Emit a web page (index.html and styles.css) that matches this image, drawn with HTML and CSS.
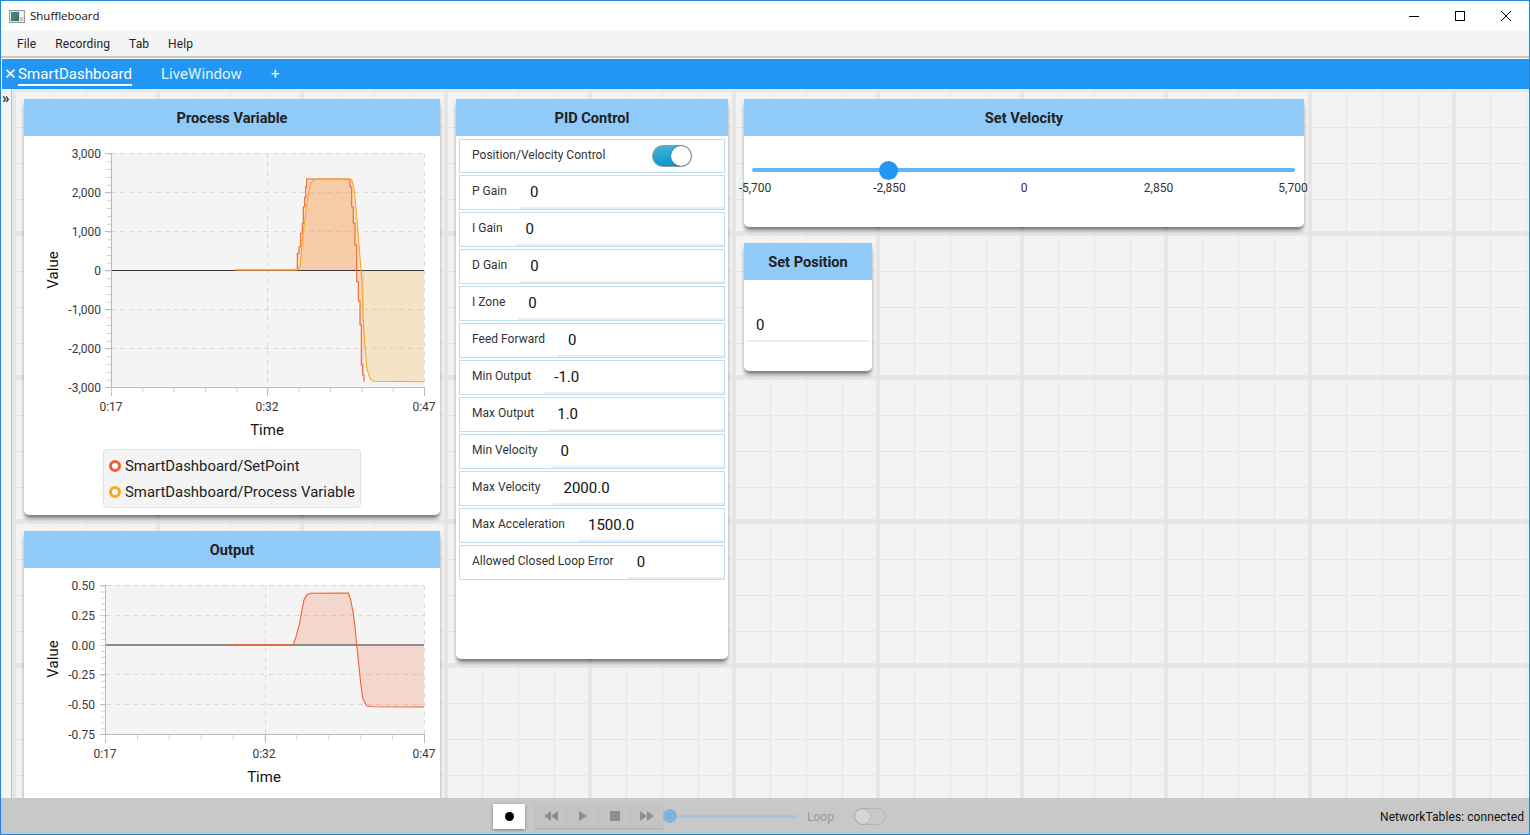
FILE: index.html
```html
<!DOCTYPE html>
<html lang="en">
<head>
  <meta charset="UTF-8" />
  <title>Shuffleboard</title>
  <link rel="stylesheet" href="styles.css">
</head>
<body>
  <div class="window">
    <div class="titlebar">
      <svg class="app-icon" width="16" height="13" viewBox="0 0 16 13">
        <defs>
          <linearGradient id="iconGrad" x1="0" y1="0" x2="1" y2="1">
            <stop offset="0" stop-color="#4f8f8f"/>
            <stop offset="1" stop-color="#2f6f6f"/>
          </linearGradient>
        </defs>
        <rect x=".5" y=".5" width="15" height="12" fill="#e4e8e6" stroke="#9a9a9a"/>
        <rect x="2" y="2" width="8" height="9" fill="url(#iconGrad)"/>
        <rect x="11" y="2" width="3" height="5" fill="#ffffff"/>
        <rect x="11" y="7" width="3" height="4" fill="#bcd0c4"/>
      </svg>
      <span class="app-name">Shuffleboard</span>
      <div class="win-controls">
        <svg width="46" height="30" viewBox="0 0 46 30"><path d="M18 15.5H28" stroke="#000" fill="none"/></svg>
        <svg width="46" height="30" viewBox="0 0 46 30"><rect x="18.5" y="10.5" width="9" height="9" stroke="#000" fill="none"/></svg>
        <svg width="46" height="30" viewBox="0 0 46 30"><path d="M18 10L28 20M28 10L18 20" stroke="#000" fill="none"/></svg>
      </div>
    </div>

    <div class="menubar">
      <span>File</span>
      <span>Recording</span>
      <span>Tab</span>
      <span>Help</span>
    </div>

    <div class="tabbar">
      <span class="tab-close">✕</span>
      <span class="tab active">SmartDashboard</span>
      <span class="tab">LiveWindow</span>
      <span class="tab-add">+</span>
    </div>

    <div class="main">
      <div class="sidebar">»</div>
      <div class="canvas">

        <div class="tile process">
          <div class="tile-title">Process Variable</div>
          <div class="chart-body">
            <svg class="chart" width="416" height="313" viewBox="24 136 416 313">
              <rect class="plot-bg" x="111" y="153" width="313" height="234"/>
              <path class="grid" d="M111 153.5H424M111 192.5H424M111 231.5H424M111 309.5H424M111 348.5H424M267.5 153V387M424.5 153V387"/>
              <polygon class="fill-red" points="235,270 296.5,270 297.3,253.3 299,253.3 299,246.7 300.7,246.7 300.7,233.3 302.3,233.3 302.3,223.3 303.3,223.3 303.3,206.7 304.7,206.7 304.7,197.3 305.7,197.3 305.7,186.7 306.7,186.7 306.7,179 350,179 350,186.7 351.7,186.7 351.7,206.7 353.3,206.7 353.3,223.3 355,223.3 355,245 356.7,245 356.7,281.7 358.3,281.7 358.3,301 360,301 360,325 361.3,325 361.3,365 362.7,365 362.7,375 364,375 364,270"/>
              <polygon class="fill-yellow" points="235,270 296.7,270 300,266.7 301,256.7 303.3,231.7 306,211.7 308.3,193.3 310.7,183.3 313.3,180 316.7,179 348.3,179 351.7,180 354,188.3 356,208.3 358.3,235 360,258.3 361.7,278.3 363.3,321.7 365.3,351.7 367.3,370 370,378.3 373.3,381.3 424,381.7 424,270"/>
              <path class="zero-line" d="M111 270.5H424"/>
              <polyline class="line-red" points="235,270 296.5,270 297.3,270 297.3,253.3 299,253.3 299,246.7 300.7,246.7 300.7,233.3 302.3,233.3 302.3,223.3 303.3,223.3 303.3,206.7 304.7,206.7 304.7,197.3 305.7,197.3 305.7,186.7 306.7,186.7 306.7,179 350,179 350,186.7 351.7,186.7 351.7,206.7 353.3,206.7 353.3,223.3 355,223.3 355,245 356.7,245 356.7,281.7 358.3,281.7 358.3,301 360,301 360,325 361.3,325 361.3,365 362.7,365 362.7,375 364,375 364,381.7"/>
              <polyline class="line-yellow" points="235,270 296.7,270 300,266.7 301,256.7 303.3,231.7 306,211.7 308.3,193.3 310.7,183.3 313.3,180 316.7,179 348.3,179 351.7,180 354,188.3 356,208.3 358.3,235 360,258.3 361.7,278.3 363.3,321.7 365.3,351.7 367.3,370 370,378.3 373.3,381.3 424,381.7"/>
              <path class="axis" d="M111.5 153V387.5H424M105 153.5H111M105 192.5H111M105 231.5H111M105 270.5H111M105 309.5H111M105 348.5H111M105 387.5H111M111.5 387V396M267.5 387V396M424.5 387V396"/>
              <line class="minor" x1="109" y1="153.5" x2="109" y2="387.5" stroke-width="4" stroke-dasharray="1 6.8"/>
              <line class="minor" x1="111" y1="390" x2="424" y2="390" stroke-width="5" stroke-dasharray="1 30.3"/>
              <text class="tick y" x="101" y="158">3,000</text>
              <text class="tick y" x="101" y="197">2,000</text>
              <text class="tick y" x="101" y="236">1,000</text>
              <text class="tick y" x="101" y="275">0</text>
              <text class="tick y" x="101" y="314">-1,000</text>
              <text class="tick y" x="101" y="353">-2,000</text>
              <text class="tick y" x="101" y="392">-3,000</text>
              <text class="tick x" x="111" y="411">0:17</text>
              <text class="tick x" x="267" y="411">0:32</text>
              <text class="tick x" x="424" y="411">0:47</text>
              <text class="axis-label" x="267" y="435">Time</text>
              <text class="axis-label" transform="translate(58 270) rotate(-90)">Value</text>
            </svg>
            <div class="legend">
              <div class="legend-item"><span class="dot red"></span>SmartDashboard/SetPoint</div>
              <div class="legend-item"><span class="dot yellow"></span>SmartDashboard/Process Variable</div>
            </div>
          </div>
        </div>

        <div class="tile pid">
          <div class="tile-title">PID Control</div>
          <div class="pid-rows">
            <div class="pid-row first">
              <span class="pid-label">Position/Velocity Control</span>
              <span class="switch"><span class="knob"></span></span>
            </div>
            <div class="pid-row"><span class="pid-label">P Gain</span><span class="pid-input">0</span></div>
            <div class="pid-row"><span class="pid-label">I Gain</span><span class="pid-input">0</span></div>
            <div class="pid-row"><span class="pid-label">D Gain</span><span class="pid-input">0</span></div>
            <div class="pid-row"><span class="pid-label">I Zone</span><span class="pid-input">0</span></div>
            <div class="pid-row"><span class="pid-label">Feed Forward</span><span class="pid-input">0</span></div>
            <div class="pid-row"><span class="pid-label">Min Output</span><span class="pid-input">-1.0</span></div>
            <div class="pid-row"><span class="pid-label">Max Output</span><span class="pid-input">1.0</span></div>
            <div class="pid-row"><span class="pid-label">Min Velocity</span><span class="pid-input">0</span></div>
            <div class="pid-row"><span class="pid-label">Max Velocity</span><span class="pid-input">2000.0</span></div>
            <div class="pid-row"><span class="pid-label">Max Acceleration</span><span class="pid-input">1500.0</span></div>
            <div class="pid-row"><span class="pid-label">Allowed Closed Loop Error</span><span class="pid-input">0</span></div>
          </div>
        </div>

        <div class="tile velocity">
          <div class="tile-title">Set Velocity</div>
          <div class="slider-body">
            <div class="slider-track"><span class="slider-thumb"></span></div>
            <div class="slider-labels">
              <span>-5,700</span>
              <span>-2,850</span>
              <span>0</span>
              <span>2,850</span>
              <span>5,700</span>
            </div>
          </div>
        </div>

        <div class="tile position">
          <div class="tile-title">Set Position</div>
          <div class="position-body"><div class="position-input">0</div></div>
        </div>

        <div class="tile output">
          <div class="tile-title">Output</div>
          <svg class="chart" width="416" height="228" viewBox="24 568 416 228">
            <rect class="plot-bg" x="106" y="585" width="318" height="149"/>
            <path class="grid" d="M106 585.5H424M106 615.5H424M106 674.5H424M106 704.5H424M265.5 585V734M424.5 585V734"/>
            <polygon class="fill-red" points="230,645 293.3,645 296,636.7 299.3,625 301.7,611.7 304,600 306.7,595 310,593.3 348.3,593 350.7,600 353.3,613.3 355,626.7 356.7,645 358.3,660 360.7,683.3 362.7,698.3 366.7,706 373.3,706.7 424,707 424,645"/>
            <path class="zero-line soft" d="M106 645H424"/>
            <polyline class="line-red" points="230,644.7 293.3,644.7 296,636.7 299.3,625 301.7,611.7 304,600 306.7,595 310,593.3 348.3,593 350.7,600 353.3,613.3 355,626.7 356.7,645 358.3,660 360.7,683.3 362.7,698.3 366.7,706 373.3,706.7 424,707"/>
            <path class="axis" d="M105.5 585V734.5H424M100 585.5H106M100 615.5H106M100 645.5H106M100 674.5H106M100 704.5H106M100 734.5H106M105.5 734V743M265.5 734V743M424.5 734V743"/>
            <line class="minor" x1="103" y1="585.5" x2="103" y2="734.5" stroke-width="4" stroke-dasharray="1 4.95"/>
            <line class="minor" x1="105" y1="737" x2="424" y2="737" stroke-width="5" stroke-dasharray="1 30.9"/>
            <text class="tick y" x="95" y="590">0.50</text>
            <text class="tick y" x="95" y="620">0.25</text>
            <text class="tick y" x="95" y="650">0.00</text>
            <text class="tick y" x="95" y="679">-0.25</text>
            <text class="tick y" x="95" y="709">-0.50</text>
            <text class="tick y" x="95" y="739">-0.75</text>
            <text class="tick x" x="105" y="758">0:17</text>
            <text class="tick x" x="264" y="758">0:32</text>
            <text class="tick x" x="424" y="758">0:47</text>
            <text class="axis-label" x="264" y="782">Time</text>
            <text class="axis-label" transform="translate(58 659) rotate(-90)">Value</text>
          </svg>
        </div>

      </div>
    </div>

    <div class="statusbar">
      <div class="record-btn"><span class="record-dot"></span></div>
      <div class="playback">
        <span class="play-btn"><svg width="14" height="10" viewBox="0 0 14 10"><path d="M7 0V10L0 5ZM14 0V10L7 5Z"/></svg></span>
        <span class="play-btn"><svg width="8" height="10" viewBox="0 0 8 10"><path d="M0 0V10L8 5Z"/></svg></span>
        <span class="play-btn"><svg width="10" height="10" viewBox="0 0 10 10"><rect width="10" height="10"/></svg></span>
        <span class="play-btn"><svg width="14" height="10" viewBox="0 0 14 10"><path d="M0 0V10L7 5ZM7 0V10L14 5Z"/></svg></span>
      </div>
      <div class="seek"><span class="seek-thumb"></span></div>
      <span class="loop-label">Loop</span>
      <span class="loop-switch"><span class="loop-knob"></span></span>
      <span class="connection">NetworkTables: connected</span>
    </div>
  </div>
</body>
</html>
```

FILE: styles.css
```css
* {
  box-sizing: border-box;
}
html, body {
  margin: 0;
  padding: 0;
  height: 100%;
  overflow: hidden;
}
body {
  font-family: Roboto, "Liberation Sans", sans-serif;
  font-size: 12px;
  color: #2b2b2b;
}
.window {
  width: 1530px;
  height: 835px;
  border: 1px solid #1f83d6;
  display: flex;
  flex-direction: column;
  background-color: white;
}

/* title + menu */
.titlebar {
  height: 30px;
  display: flex;
  align-items: center;
  padding-left: 8px;
  background-color: white;
  flex-shrink: 0;
}
.app-icon {
  margin-right: 5px;
}
.app-name {
  font-family: "Open Sans", sans-serif;
  font-size: 11.5px;
  color: #111;
  margin-top: -2px;
}
.win-controls {
  margin-left: auto;
  display: flex;
}
.menubar {
  height: 25px;
  display: flex;
  align-items: center;
  padding-left: 16px;
  gap: 19px;
  letter-spacing: 0.1px;
  background-color: #f4f4f4;
  color: #222;
  flex-shrink: 0;
}
.tabbar {
  height: 33px;
  border-top: 2px solid #c8c8c8;
  background-color: #2196f3;
  box-shadow: inset 0 1px 0 white, inset 1px 0 0 white;
  display: flex;
  align-items: center;
  color: #e3f2fd;
  font-size: 15px;
  letter-spacing: 0.06px;
  padding: 1px 0 0 3px;
  flex-shrink: 0;
}
.tab-close {
  font-size: 15px;
  color: white;
  width: 14px;
}
.tab {
  height: 24px;
  line-height: 25px;
  margin-right: 29px;
}
.tab.active {
  color: white;
  border-bottom: 2px solid white;
}
.tab-add {
  color: white;
}

/* dashboard */
.main {
  flex: 1;
  display: flex;
  min-height: 0;
  overflow: hidden;
}
.sidebar {
  width: 11px;
  flex-shrink: 0;
  background-color: #f4f4f4;
  border-right: 1px solid #c4c4c4;
  font-size: 15px;
  font-weight: 700;
  line-height: 18px;
  padding-left: 1px;
}
.canvas {
  flex: 1;
  display: grid;
  grid-template-columns: repeat(10, 144px);
  grid-auto-rows: 144px;
  padding: 2px 0 0 4px;
  overflow: hidden;
  background-color: #f3f3f3;
  background-image:
    linear-gradient(to right, #e6e6e6 4px, transparent 4px),
    linear-gradient(to bottom, #e6e6e6 2px, transparent 2px, transparent 142px, #e6e6e6 142px),
    linear-gradient(to right, transparent 2px, #e6e6e6 2px, #e6e6e6 3px, transparent 3px),
    linear-gradient(to bottom, transparent 2px, #e6e6e6 2px, #e6e6e6 3px, transparent 3px);
  background-size: 144px 144px, 144px 144px, 36px 36px, 36px 36px;
}
.tile {
  margin: 8px;
  background-color: white;
  border-radius: 0 0 5px 5px;
  box-shadow: 0 4px 4px -1px rgba(0,0,0,0.55);
  display: flex;
  flex-direction: column;
  min-height: 0;
}
.tile-title {
  height: 37px;
  flex-shrink: 0;
  background-color: #90caf9;
  color: #212121;
  font-size: 14.6px;
  font-weight: 700;
  line-height: 39px;
  text-align: center;
}
.process {
  grid-column: 1 / span 3;
  grid-row: 1 / span 3;
}
.pid {
  grid-column: 4 / span 2;
  grid-row: 1 / span 4;
}
.velocity {
  grid-column: 6 / span 4;
  grid-row: 1;
}
.position {
  grid-column: 6;
  grid-row: 2;
}
.output {
  grid-column: 1 / span 3;
  grid-row: 4 / span 3;
}

/* charts */
.chart {
  display: block;
  flex-shrink: 0;
}
.plot-bg {
  fill: #f4f4f4;
}
.grid {
  fill: none;
  stroke: #dcdcdc;
  stroke-dasharray: 5 4;
}
.zero-line {
  fill: none;
  stroke: #3a3a3a;
}
.zero-line.soft {
  stroke: #8c8c8c;
  stroke-width: 2;
}
.axis {
  fill: none;
  stroke: #b9b9b9;
}
.minor {
  stroke: #cfcfcf;
}
.fill-red {
  fill: rgba(243,98,45,0.2);
}
.fill-yellow {
  fill: rgba(249,168,37,0.22);
}
.line-red, .line-yellow {
  fill: none;
  stroke-width: 1.1;
}
.line-red {
  stroke: #f3622d;
}
.line-yellow {
  stroke: #fba71b;
}
.tick {
  font-size: 12px;
  fill: #3a3a3a;
}
.tick.y {
  text-anchor: end;
}
.tick.x {
  text-anchor: middle;
}
.axis-label {
  font-size: 15px;
  fill: #111;
  text-anchor: middle;
}
.legend {
  margin: 0 0 0 79px;
  width: 258px;
  height: 59px;
  background-color: #f4f4f4;
  border: 1px solid #e4e4e4;
  border-radius: 4px;
  padding: 3px 5px;
  font-size: 14.9px;
  color: #222;
  white-space: nowrap;
}
.legend-item {
  height: 26px;
  display: flex;
  align-items: center;
  gap: 4px;
}
.dot {
  width: 12px;
  height: 12px;
  flex-shrink: 0;
  border-radius: 50%;
  border: 3px solid;
  background-color: white;
}
.dot.red {
  border-color: #f3622d;
}
.dot.yellow {
  border-color: #fba71b;
}

/* pid rows */
.pid-rows {
  display: flex;
  flex-direction: column;
  gap: 2px;
  padding: 3px 3px 0;
}
.pid-row {
  height: 35px;
  border: 1px solid #bbdefb;
  display: flex;
  align-items: stretch;
  padding-left: 12px;
  gap: 13px;
}
.pid-row.first {
  height: 34px;
  align-items: center;
  justify-content: space-between;
  padding-right: 32px;
}
.pid-row.first .pid-label {
  margin-top: -3px;
  line-height: 20px;
}
.pid-label {
  line-height: 31px;
  white-space: nowrap;
  color: #333;
  letter-spacing: 0.02px;
}
.pid-input {
  flex: 1;
  font-size: 15px;
  line-height: 33px;
  padding-left: 10px;
  border-bottom: 2px solid #ededed;
  color: #111;
}
.switch {
  width: 40px;
  height: 22px;
  border-radius: 11px;
  background: linear-gradient(to bottom, #42b4da, #0a98c9);
  border: 1px solid #8f9ba0;
  display: flex;
  justify-content: flex-end;
}
.knob {
  width: 20px;
  height: 20px;
  border-radius: 50%;
  background-color: white;
  box-shadow: 0 0 2px rgba(0,0,0,0.5);
}

/* slider */
.slider-body {
  padding: 32px 9px 0 8px;
  position: relative;
}
.slider-track {
  height: 4px;
  border-radius: 2px;
  background-color: #64b5f6;
  position: relative;
}
.slider-thumb {
  position: absolute;
  left: 25%;
  top: -7px;
  width: 19px;
  height: 19px;
  margin-left: -9px;
  border-radius: 50%;
  background-color: #2196f3;
}
.slider-labels {
  display: flex;
  justify-content: space-between;
  margin-top: 9px;
  padding: 0 2px 0 3px;
  color: #333;
}
.slider-labels span {
  width: 0;
  display: flex;
  justify-content: center;
  white-space: nowrap;
}

/* set position */
.position-body {
  flex: 1;
  padding: 36px 2px 0;
}
.position-input {
  height: 26px;
  padding-left: 10px;
  font-size: 15px;
  line-height: 18px;
  border-bottom: 2px solid #eeeeee;
  color: #111;
}

/* bottom bar */
.statusbar {
  height: 36px;
  flex-shrink: 0;
  background-color: #c8c8c8;
  display: flex;
  align-items: center;
  padding-left: 492px;
  color: #999;
}
.record-btn {
  width: 32px;
  height: 25px;
  background-color: white;
  box-shadow: 0 1px 3px rgba(0,0,0,0.4);
  display: flex;
  align-items: center;
  justify-content: center;
}
.record-dot {
  width: 9px;
  height: 9px;
  border-radius: 50%;
  background-color: black;
}
.playback {
  display: flex;
  margin-left: 10px;
}
.play-btn {
  width: 32px;
  height: 24px;
  background-color: #c4c4c4;
  box-shadow: 0 1px 2px rgba(0,0,0,0.15);
  display: flex;
  align-items: center;
  justify-content: center;
}
.play-btn svg {
  fill: #8e8e8e;
}
.seek {
  width: 134px;
  height: 3px;
  background-color: #a3c6e0;
  border-radius: 2px;
  position: relative;
}
.seek-thumb {
  position: absolute;
  left: 0;
  top: -6px;
  width: 14px;
  height: 14px;
  border-radius: 50%;
  background-color: #7fb3dc;
}
.loop-label {
  margin: 2px 0 0 10px;
  width: 47px;
}
.loop-switch {
  width: 32px;
  height: 17px;
  border-radius: 9px;
  border: 1px solid #b4b4b4;
  display: flex;
}
.loop-knob {
  width: 15px;
  height: 15px;
  border-radius: 50%;
  background-color: #d6d6d6;
  box-shadow: 0 0 1px rgba(0,0,0,0.4);
}
.connection {
  margin: 2px 0 0 auto;
  padding-right: 5px;
  color: #111;
  letter-spacing: 0.08px;
}
```
